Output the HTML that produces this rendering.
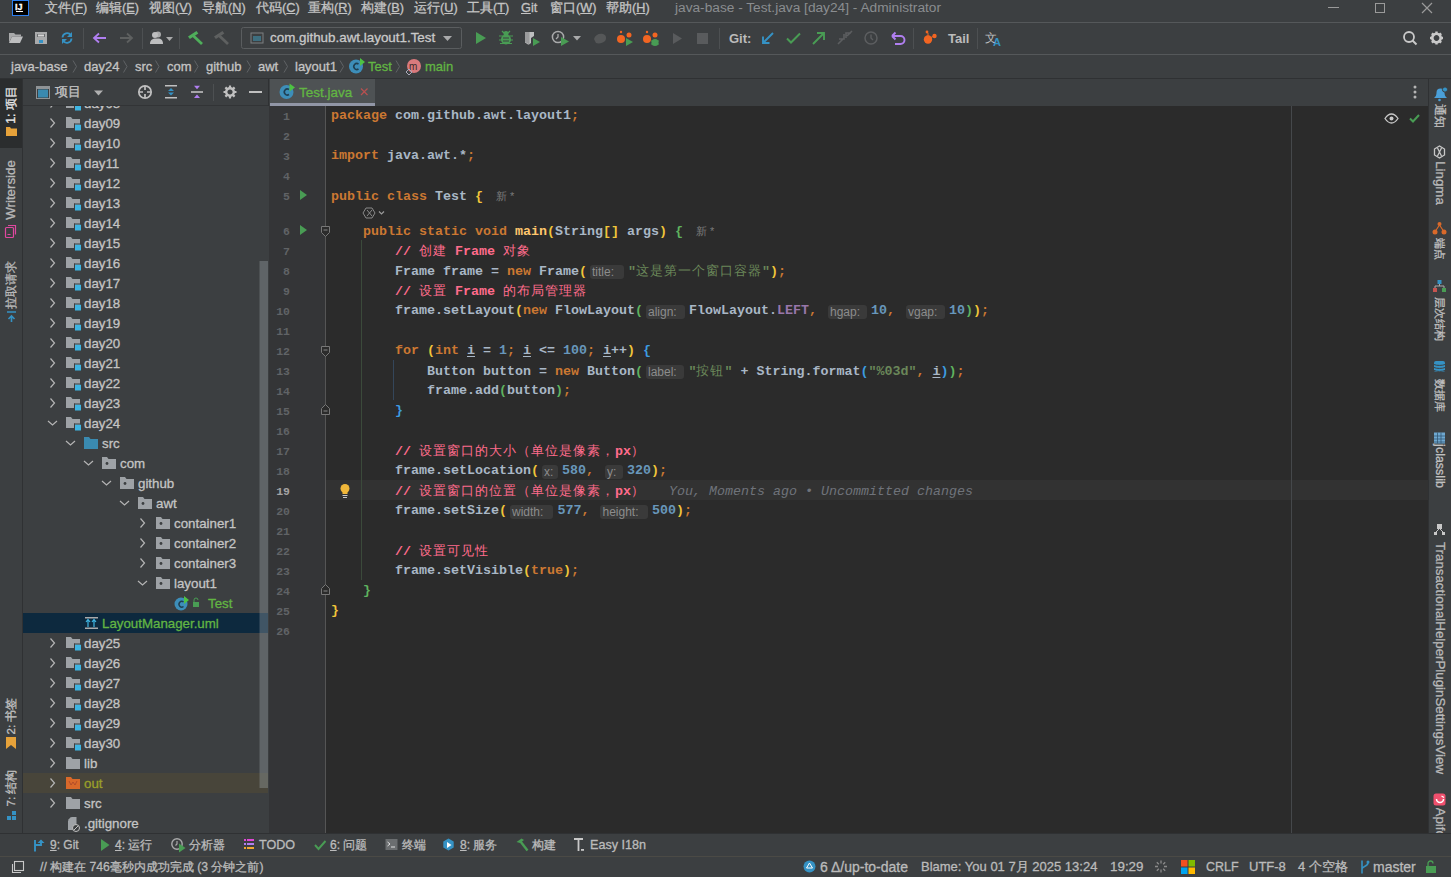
<!DOCTYPE html>
<html><head><meta charset="utf-8">
<style>
*{margin:0;padding:0;box-sizing:border-box}
html,body{width:1451px;height:877px;overflow:hidden;background:#3c3f41;font-family:"Liberation Sans",sans-serif;color:#bbbbbb;font-size:13px}
.a{position:absolute}
.t{position:absolute;white-space:nowrap;line-height:16px;-webkit-text-stroke:0.3px currentColor}
.sep{position:absolute;background:#515658}
.ic{position:absolute}
</style></head><body>

<!-- MENU BAR -->
<div class="a" style="left:0;top:0;width:1451px;height:22px;background:#3c3f41"></div>
<div class="a" style="left:12px;top:0;width:17px;height:16px;background:#000;border:1px solid #2d7ff0"></div>
<div class="t" style="left:15px;top:-1px;font-size:9px;color:#fff;font-weight:bold">IJ</div>
<div class="a" style="left:16px;top:11px;width:7px;height:1px;background:#fff"></div>
<div id="menu"><div class="t" style="left:45px;top:0px;color:#c4c4c4;font-size:12.7px">文件(<u>F</u>)</div><div class="t" style="left:96px;top:0px;color:#c4c4c4;font-size:12.7px">编辑(<u>E</u>)</div><div class="t" style="left:149px;top:0px;color:#c4c4c4;font-size:12.7px">视图(<u>V</u>)</div><div class="t" style="left:202px;top:0px;color:#c4c4c4;font-size:12.7px">导航(<u>N</u>)</div><div class="t" style="left:256px;top:0px;color:#c4c4c4;font-size:12.7px">代码(<u>C</u>)</div><div class="t" style="left:308px;top:0px;color:#c4c4c4;font-size:12.7px">重构(<u>R</u>)</div><div class="t" style="left:361px;top:0px;color:#c4c4c4;font-size:12.7px">构建(<u>B</u>)</div><div class="t" style="left:414px;top:0px;color:#c4c4c4;font-size:12.7px">运行(<u>U</u>)</div><div class="t" style="left:467px;top:0px;color:#c4c4c4;font-size:12.7px">工具(<u>T</u>)</div><div class="t" style="left:521px;top:0px;color:#c4c4c4;font-size:12.7px"><u>G</u>it</div><div class="t" style="left:550px;top:0px;color:#c4c4c4;font-size:12.7px">窗口(<u>W</u>)</div><div class="t" style="left:606px;top:0px;color:#c4c4c4;font-size:12.7px">帮助(<u>H</u>)</div></div>

<div class="t" style="left:675px;top:0px;color:#8a8d90;font-size:13.7px;-webkit-text-stroke:0">java-base - Test.java [day24] - Administrator</div>
<div class="a" style="left:1328px;top:7px;width:11px;height:1px;background:#9a9a9a"></div>
<div class="a" style="left:1375px;top:3px;width:10px;height:10px;border:1px solid #9a9a9a"></div>
<svg class="ic" style="left:1421px;top:2px" width="12" height="12"><path d="M1 1L11 11M11 1L1 11" stroke="#9a9a9a" stroke-width="1.2"/></svg>
<div class="sep" style="left:0;top:22px;width:1451px;height:1px;background:#55585a"></div>

<!-- TOOLBAR -->
<svg class="a" style="left:0;top:0" width="1451" height="56">
<!-- open folder -->
<path d="M9 33h5l1.5 1.5H21v2H12l-3 6z" fill="#a9aaab"/>
<path d="M9 43l3-6.5h11l-3 6.5z" fill="#bdbebf"/>
<!-- save -->
<rect x="35" y="32" width="12" height="12" fill="#a9aaab"/>
<rect x="37" y="34" width="8" height="3" fill="#6b6d6f"/>
<rect x="38" y="34.5" width="6" height="2" fill="#d6d6d6"/>
<rect x="39" y="40" width="4" height="3" fill="#3592c4"/>
<!-- sync -->
<path d="M62.5 37.5a4.6 4.6 0 0 1 8.4-2.3" fill="none" stroke="#3592c4" stroke-width="1.8"/>
<path d="M72 32v5h-5z" fill="#3592c4"/>
<path d="M71.5 38.5a4.6 4.6 0 0 1-8.4 2.3" fill="none" stroke="#3592c4" stroke-width="1.8"/>
<path d="M62 44v-5h5z" fill="#3592c4"/>
<rect x="83" y="28" width="1" height="21" fill="#4d5052"/>
<!-- back -->
<path d="M94 38h12M99 33.5L94 38l5 4.5" fill="none" stroke="#b07ff0" stroke-width="1.8"/>
<!-- forward -->
<path d="M120 38h12M127 33.5l5 4.5-5 4.5" fill="none" stroke="#5e6060" stroke-width="1.8"/>
<rect x="142" y="28" width="1" height="21" fill="#4d5052"/>
<!-- user -->
<circle cx="158" cy="34.5" r="3" fill="#a9aaab"/>
<path d="M150 44c0-4 2.5-5.5 6-5.5h2c3 0 5 1.5 5 5.5z" fill="#bdbebf"/>
<circle cx="155" cy="35" r="3" fill="#bdbebf"/>
<path d="M166 37h7l-3.5 4z" fill="#a9aaab"/>
<rect x="179" y="28" width="1" height="21" fill="#4d5052"/>
<!-- hammer green -->
<path d="M188 36.5l8.5-5.5 1.8 2.6-8.4 5.4z" fill="#4fae5b"/>
<path d="M193 35.5l9 8.5" stroke="#4fae5b" stroke-width="2.8"/>
<!-- hammer gray -->
<path d="M214 36.5l8.5-5.5 1.8 2.6-8.4 5.4z" fill="#5e6060"/>
<path d="M219 35.5l9 8.5" stroke="#5e6060" stroke-width="2.8"/>
<!-- run config combo -->
<rect x="241.5" y="27.5" width="220" height="21" rx="2" fill="none" stroke="#5a5d5f"/>
<rect x="251" y="33" width="12" height="10" fill="none" stroke="#7d8082"/>
<rect x="253" y="36" width="8" height="5" fill="#3e6f80"/>
<path d="M443 36h9l-4.5 5z" fill="#a9aaab"/>
<!-- run -->
<path d="M476 32v12l10-6z" fill="#499c54"/>
<!-- debug -->
<ellipse cx="506" cy="39.5" rx="5" ry="5" fill="#499c54"/>
<circle cx="506" cy="33.5" r="2.5" fill="#499c54"/>
<path d="M499 36h14M499 40h14M500 43.5h12M502 31l2 2M510 31l-2 2" stroke="#499c54" stroke-width="1.2"/>
<path d="M503 38h6M503 41h6" stroke="#3c3f41" stroke-width="1"/>
<!-- coverage -->
<path d="M525 32h9v4l-3 2v5l-2 1.5h-1l-3-2z" fill="#bdbebf"/>
<path d="M525 32h4.5v12l-1 0-3.5-2z" fill="#9a9b9c"/>
<path d="M533 38v8l7-4z" fill="#499c54"/>
<!-- profiler -->
<circle cx="558" cy="37" r="5.6" fill="none" stroke="#a9aaab" stroke-width="1.5"/>
<path d="M558 34v3l-2 2" stroke="#a9aaab" stroke-width="1.3" fill="none"/>
<path d="M561 37v9l8-4.5z" fill="#499c54"/>
<path d="M573 36h8l-4 4.5z" fill="#a9aaab"/>
<!-- gray hand -->
<path d="M594 39c1-4 5-6 9-5 3 1 4 4 2 7-2 2-6 3-9 2z" fill="#555758"/>
<!-- orange run -->
<circle cx="621" cy="39" r="4" fill="#f26522"/>
<circle cx="629" cy="35" r="2.5" fill="#f26522"/>
<circle cx="621" cy="32" r="1.2" fill="#f26522"/>
<path d="M626 38v8l7-4z" fill="#499c54"/>
<!-- orange debug -->
<circle cx="647" cy="39" r="4" fill="#f26522"/>
<circle cx="655" cy="35" r="2.5" fill="#f26522"/>
<circle cx="647" cy="32" r="1.2" fill="#f26522"/>
<ellipse cx="655" cy="42.5" rx="3.5" ry="3.5" fill="#499c54"/>
<path d="M651 41h8M651 44h8" stroke="#499c54" stroke-width="1"/>
<!-- gray run -->
<path d="M673 33v11l9-5.5z" fill="#595b5d"/>
<!-- stop -->
<rect x="697" y="33" width="11" height="11" fill="#595b5d"/>
<rect x="719" y="28" width="1" height="21" fill="#4d5052"/>
<text x="729" y="43" font-family="Liberation Sans" font-size="13" font-weight="bold" fill="#bbbbbb">Git:</text>
<!-- update arrow -->
<path d="M773 33l-10 10M763 36.5v6.5h6.5" fill="none" stroke="#3592c4" stroke-width="1.9"/>
<!-- check -->
<path d="M787 38.5l4 4 9-9" fill="none" stroke="#499c54" stroke-width="2"/>
<!-- push arrow -->
<path d="M813 44l11-11M817 33h7v7" fill="none" stroke="#499c54" stroke-width="1.9"/>
<!-- merge gray -->
<path d="M838 44l5-5M847 36l5-5M844 34v5h-5M846 38v-5h5" fill="none" stroke="#5c5e60" stroke-width="1.6"/>
<!-- clock -->
<circle cx="871" cy="38" r="6" fill="none" stroke="#5c5e60" stroke-width="1.5"/>
<path d="M871 34.5v3.5l2 2" fill="none" stroke="#5c5e60" stroke-width="1.4"/>
<!-- undo -->
<path d="M893 36h7.5a4 4 0 0 1 0 8H895" fill="none" stroke="#b07ff0" stroke-width="1.9"/>
<path d="M892 36l3.5-3.5M892 36l3.5 3.5" stroke="#b07ff0" stroke-width="1.9"/>
<rect x="913" y="28" width="1" height="21" fill="#4d5052"/>
<!-- tail icon -->
<circle cx="928" cy="39.5" r="4.2" fill="#f26522"/>
<circle cx="934.5" cy="36" r="2.2" fill="#f26522"/>
<circle cx="927" cy="32" r="1.4" fill="#f26522"/>
<path d="M928 33v4M930 38l4-2" stroke="#f26522" stroke-width="1"/>
<text x="948" y="43" font-family="Liberation Sans" font-size="13" font-weight="bold" fill="#bbbbbb">Tail</text>
<rect x="977" y="28" width="1" height="21" fill="#4d5052"/>
<!-- translate -->
<text x="985" y="42" font-family="Liberation Sans" font-size="12" fill="#bdbebf">文</text>
<text x="993" y="46" font-family="Liberation Sans" font-size="11" font-weight="bold" fill="#3592c4">A</text>
<!-- search -->
<circle cx="1409" cy="37" r="5" fill="none" stroke="#c9c9c9" stroke-width="1.8"/>
<path d="M1412.5 40.5l4 4" stroke="#c9c9c9" stroke-width="2"/>
<!-- gear -->
<g transform="translate(1436.5 38)">
<circle r="4.2" fill="none" stroke="#c9c9c9" stroke-width="2.6"/>
<path d="M0-6.5v3M0 6.5v-3M-6.5 0h3M6.5 0h-3M-4.6-4.6l2 2M4.6 4.6l-2-2M-4.6 4.6l2-2M4.6-4.6l-2 2" stroke="#c9c9c9" stroke-width="2.4"/>
</g>
</svg>
<div class="t" style="left:270px;top:30px;color:#c9c9c9;font-size:13.4px">com.github.awt.layout1.Test</div>

<div class="sep" style="left:0;top:54px;width:1451px;height:1px;background:#55585a"></div>

<!-- BREADCRUMB -->
<div class="t" style="left:11px;top:59px;color:#c4c4c4;font-size:13px">java-base</div>
<div class="t" style="left:84px;top:59px;color:#c4c4c4;font-size:13px">day24</div>
<div class="t" style="left:135px;top:59px;color:#c4c4c4;font-size:13px">src</div>
<div class="t" style="left:167px;top:59px;color:#c4c4c4;font-size:13px">com</div>
<div class="t" style="left:206px;top:59px;color:#c4c4c4;font-size:13px">github</div>
<div class="t" style="left:258px;top:59px;color:#c4c4c4;font-size:13px">awt</div>
<div class="t" style="left:295px;top:59px;color:#c4c4c4;font-size:13px">layout1</div>
<div class="t" style="left:368px;top:59px;color:#62b543;font-size:13px">Test</div>
<div class="t" style="left:425px;top:59px;color:#62b543;font-size:13px">main</div>
<svg class="a" style="left:0;top:54px" width="470" height="24">
<g fill="none" stroke="#606366" stroke-width="1">
<path d="M73 6.5l3.5 6-3.5 6"/><path d="M123.5 6.5l3.5 6-3.5 6"/><path d="M155.5 6.5l3.5 6-3.5 6"/><path d="M194.5 6.5l3.5 6-3.5 6"/>
<path d="M247 6.5l3.5 6-3.5 6"/><path d="M284 6.5l3.5 6-3.5 6"/><path d="M340 6.5l3.5 6-3.5 6"/><path d="M396 6.5l3.5 6-3.5 6"/>
</g>
<circle cx="356" cy="12.5" r="7" fill="#3d8eb9"/>
<path d="M358.5 10a3 3 0 1 0 0 5" fill="none" stroke="#1f3f52" stroke-width="1.6"/>
<path d="M360 4v8l5-4z" fill="#4ec243"/>
<circle cx="414" cy="12" r="7" fill="#d97a7d"/>
<text x="409" y="15.5" font-family="Liberation Sans" font-size="10" fill="#3a2a2a">m</text>
<path d="M409 15l3 3-3 3-3-3z" fill="none" stroke="#aab" stroke-width="1"/>
</svg>

<div class="a" style="left:0;top:78px;width:1451px;height:1px;background:#2f3133"></div>

<!-- LEFT STRIPE -->
<div class="a" style="left:0;top:79px;width:22px;height:754px;background:#3c3f41"></div>
<div class="a" style="left:0;top:79px;width:22px;height:64px;background:#2d2f30"></div>
<div class="a" style="left:22px;top:79px;width:1px;height:754px;background:#2f3133"></div>
<div class="a" style="left:0;top:79px;width:22px;height:69px;background:#2b2d2e"></div>
<div class="t" style="left:11px;top:105px;transform:translate(-50%,-50%) rotate(-90deg);color:#e8e8e8;font-size:12.3px">1: 项目</div>
<svg class="a" style="left:0;top:120px" width="22" height="20"><path d="M6 7h4l1 1.5h6V16H6z" fill="#e6a23a"/></svg>
<div class="t" style="left:11px;top:190px;transform:translate(-50%,-50%) rotate(-90deg);color:#b8b8b8;font-size:13.3px">Writerside</div>
<svg class="a" style="left:0;top:222px" width="22" height="20"><rect x="5.5" y="5.5" width="8" height="10" rx="1" fill="none" stroke="#e048a0" stroke-width="1.2"/><path d="M8 3.5h7.5v9" fill="none" stroke="#e048a0" stroke-width="1.2"/><path d="M7.5 12.5h3" stroke="#e048a0"/></svg>
<div class="t" style="left:11px;top:285px;transform:translate(-50%,-50%) rotate(-90deg);color:#b8b8b8;font-size:12px">拉取请求</div>
<svg class="a" style="left:0;top:309px" width="22" height="16"><path d="M7 3h9M11.5 13V7M8.5 10l3-3 3 3" fill="none" stroke="#3592c4" stroke-width="1.6"/></svg>
<div class="t" style="left:11px;top:716px;transform:translate(-50%,-50%) rotate(-90deg);color:#c0c0c0;font-size:11.5px">2: 书签</div>
<svg class="a" style="left:0;top:735px" width="22" height="16"><path d="M6 2h10v12l-5-4-5 4z" fill="#e6a23a"/></svg>
<div class="t" style="left:11px;top:788px;transform:translate(-50%,-50%) rotate(-90deg);color:#c0c0c0;font-size:11.5px">7: 结构</div>
<svg class="a" style="left:0;top:808px" width="22" height="16"><rect x="12" y="3" width="4" height="4" fill="#3592c4"/><rect x="7" y="8" width="4" height="4" fill="#3592c4"/><rect x="12" y="8" width="4" height="4" fill="#3592c4"/></svg>


<!-- PROJECT PANEL -->
<div class="a" style="left:23px;top:79px;width:245px;height:754px;background:#3c3f41"></div>
<svg class="a" style="left:22px;top:79px" width="246" height="26">
<rect x="14.5" y="7.5" width="13" height="12" fill="none" stroke="#8f9396"/>
<rect x="15" y="8" width="12" height="2" fill="#8f9396"/>
<rect x="16" y="10.5" width="10" height="8" fill="#3a8ab0"/>
<path d="M72 11.5h9l-4.5 5z" fill="#b0b0b0"/>
<circle cx="123" cy="13" r="6.2" fill="none" stroke="#c0c0c0" stroke-width="1.7"/>
<path d="M123 7v4M123 15v4M117 13h4M125 13h4" stroke="#c0c0c0" stroke-width="1.7"/>
<path d="M143 6.8h12M143 18.8h12" stroke="#c0c0c0" stroke-width="1.6"/>
<path d="M146 12.1l3-3 3 3zM146 13.5l3 3 3-3z" fill="#3592c4"/>
<path d="M169 13h12" stroke="#c0c0c0" stroke-width="1.6"/>
<path d="M172 6.8l3 3.4 3-3.4zM172 18.9l3-3.4 3 3.4z" fill="#b07ff0"/>
<rect x="191" y="5" width="1" height="17" fill="#4d5052"/>
<g transform="translate(208 13)">
<circle r="3.8" fill="none" stroke="#c0c0c0" stroke-width="2.4"/>
<path d="M0-6.5v3M0 6.5v-3M-6.5 0h3M6.5 0h-3M-4.6-4.6l2 2M4.6 4.6l-2-2M-4.6 4.6l2-2M4.6-4.6l-2 2" stroke="#c0c0c0" stroke-width="2.2"/>
</g>
<rect x="227" y="12" width="13" height="2" fill="#c0c0c0"/>
</svg>
<div class="t" style="left:55px;top:84px;color:#c4c4c4">项目</div>
<div class="a" style="left:23px;top:105px;width:245px;height:1px;background:#323436"></div>
<div class="a" style="left:23px;top:106px;width:245px;height:727px;overflow:hidden">
<svg class="a" style="left:0;top:0" width="245" height="727">
<path d="M27.5 -7.5l4 4.5-4 4.5" fill="none" stroke="#b5b5b5" stroke-width="1.2"/>
<path d="M43 -9h5l1.5 2h7.5v9h-14z" fill="#9ea2a6"/><rect x="52" y="-1.5" width="6" height="6" fill="#3fb5e2"/><rect x="51" y="-2.5" width="1" height="7" fill="#3c3f41"/><rect x="51" y="-2.5" width="7" height="1" fill="#3c3f41"/>
<path d="M27.5 12.5l4 4.5-4 4.5" fill="none" stroke="#b5b5b5" stroke-width="1.2"/>
<path d="M43 11h5l1.5 2h7.5v9h-14z" fill="#9ea2a6"/><rect x="52" y="18.5" width="6" height="6" fill="#3fb5e2"/><rect x="51" y="17.5" width="1" height="7" fill="#3c3f41"/><rect x="51" y="17.5" width="7" height="1" fill="#3c3f41"/>
<path d="M27.5 32.5l4 4.5-4 4.5" fill="none" stroke="#b5b5b5" stroke-width="1.2"/>
<path d="M43 31h5l1.5 2h7.5v9h-14z" fill="#9ea2a6"/><rect x="52" y="38.5" width="6" height="6" fill="#3fb5e2"/><rect x="51" y="37.5" width="1" height="7" fill="#3c3f41"/><rect x="51" y="37.5" width="7" height="1" fill="#3c3f41"/>
<path d="M27.5 52.5l4 4.5-4 4.5" fill="none" stroke="#b5b5b5" stroke-width="1.2"/>
<path d="M43 51h5l1.5 2h7.5v9h-14z" fill="#9ea2a6"/><rect x="52" y="58.5" width="6" height="6" fill="#3fb5e2"/><rect x="51" y="57.5" width="1" height="7" fill="#3c3f41"/><rect x="51" y="57.5" width="7" height="1" fill="#3c3f41"/>
<path d="M27.5 72.5l4 4.5-4 4.5" fill="none" stroke="#b5b5b5" stroke-width="1.2"/>
<path d="M43 71h5l1.5 2h7.5v9h-14z" fill="#9ea2a6"/><rect x="52" y="78.5" width="6" height="6" fill="#3fb5e2"/><rect x="51" y="77.5" width="1" height="7" fill="#3c3f41"/><rect x="51" y="77.5" width="7" height="1" fill="#3c3f41"/>
<path d="M27.5 92.5l4 4.5-4 4.5" fill="none" stroke="#b5b5b5" stroke-width="1.2"/>
<path d="M43 91h5l1.5 2h7.5v9h-14z" fill="#9ea2a6"/><rect x="52" y="98.5" width="6" height="6" fill="#3fb5e2"/><rect x="51" y="97.5" width="1" height="7" fill="#3c3f41"/><rect x="51" y="97.5" width="7" height="1" fill="#3c3f41"/>
<path d="M27.5 112.5l4 4.5-4 4.5" fill="none" stroke="#b5b5b5" stroke-width="1.2"/>
<path d="M43 111h5l1.5 2h7.5v9h-14z" fill="#9ea2a6"/><rect x="52" y="118.5" width="6" height="6" fill="#3fb5e2"/><rect x="51" y="117.5" width="1" height="7" fill="#3c3f41"/><rect x="51" y="117.5" width="7" height="1" fill="#3c3f41"/>
<path d="M27.5 132.5l4 4.5-4 4.5" fill="none" stroke="#b5b5b5" stroke-width="1.2"/>
<path d="M43 131h5l1.5 2h7.5v9h-14z" fill="#9ea2a6"/><rect x="52" y="138.5" width="6" height="6" fill="#3fb5e2"/><rect x="51" y="137.5" width="1" height="7" fill="#3c3f41"/><rect x="51" y="137.5" width="7" height="1" fill="#3c3f41"/>
<path d="M27.5 152.5l4 4.5-4 4.5" fill="none" stroke="#b5b5b5" stroke-width="1.2"/>
<path d="M43 151h5l1.5 2h7.5v9h-14z" fill="#9ea2a6"/><rect x="52" y="158.5" width="6" height="6" fill="#3fb5e2"/><rect x="51" y="157.5" width="1" height="7" fill="#3c3f41"/><rect x="51" y="157.5" width="7" height="1" fill="#3c3f41"/>
<path d="M27.5 172.5l4 4.5-4 4.5" fill="none" stroke="#b5b5b5" stroke-width="1.2"/>
<path d="M43 171h5l1.5 2h7.5v9h-14z" fill="#9ea2a6"/><rect x="52" y="178.5" width="6" height="6" fill="#3fb5e2"/><rect x="51" y="177.5" width="1" height="7" fill="#3c3f41"/><rect x="51" y="177.5" width="7" height="1" fill="#3c3f41"/>
<path d="M27.5 192.5l4 4.5-4 4.5" fill="none" stroke="#b5b5b5" stroke-width="1.2"/>
<path d="M43 191h5l1.5 2h7.5v9h-14z" fill="#9ea2a6"/><rect x="52" y="198.5" width="6" height="6" fill="#3fb5e2"/><rect x="51" y="197.5" width="1" height="7" fill="#3c3f41"/><rect x="51" y="197.5" width="7" height="1" fill="#3c3f41"/>
<path d="M27.5 212.5l4 4.5-4 4.5" fill="none" stroke="#b5b5b5" stroke-width="1.2"/>
<path d="M43 211h5l1.5 2h7.5v9h-14z" fill="#9ea2a6"/><rect x="52" y="218.5" width="6" height="6" fill="#3fb5e2"/><rect x="51" y="217.5" width="1" height="7" fill="#3c3f41"/><rect x="51" y="217.5" width="7" height="1" fill="#3c3f41"/>
<path d="M27.5 232.5l4 4.5-4 4.5" fill="none" stroke="#b5b5b5" stroke-width="1.2"/>
<path d="M43 231h5l1.5 2h7.5v9h-14z" fill="#9ea2a6"/><rect x="52" y="238.5" width="6" height="6" fill="#3fb5e2"/><rect x="51" y="237.5" width="1" height="7" fill="#3c3f41"/><rect x="51" y="237.5" width="7" height="1" fill="#3c3f41"/>
<path d="M27.5 252.5l4 4.5-4 4.5" fill="none" stroke="#b5b5b5" stroke-width="1.2"/>
<path d="M43 251h5l1.5 2h7.5v9h-14z" fill="#9ea2a6"/><rect x="52" y="258.5" width="6" height="6" fill="#3fb5e2"/><rect x="51" y="257.5" width="1" height="7" fill="#3c3f41"/><rect x="51" y="257.5" width="7" height="1" fill="#3c3f41"/>
<path d="M27.5 272.5l4 4.5-4 4.5" fill="none" stroke="#b5b5b5" stroke-width="1.2"/>
<path d="M43 271h5l1.5 2h7.5v9h-14z" fill="#9ea2a6"/><rect x="52" y="278.5" width="6" height="6" fill="#3fb5e2"/><rect x="51" y="277.5" width="1" height="7" fill="#3c3f41"/><rect x="51" y="277.5" width="7" height="1" fill="#3c3f41"/>
<path d="M27.5 292.5l4 4.5-4 4.5" fill="none" stroke="#b5b5b5" stroke-width="1.2"/>
<path d="M43 291h5l1.5 2h7.5v9h-14z" fill="#9ea2a6"/><rect x="52" y="298.5" width="6" height="6" fill="#3fb5e2"/><rect x="51" y="297.5" width="1" height="7" fill="#3c3f41"/><rect x="51" y="297.5" width="7" height="1" fill="#3c3f41"/>
<path d="M25 315l4.5 4 4.5-4" fill="none" stroke="#b5b5b5" stroke-width="1.2"/>
<path d="M43 311h5l1.5 2h7.5v9h-14z" fill="#9ea2a6"/><rect x="52" y="318.5" width="6" height="6" fill="#3fb5e2"/><rect x="51" y="317.5" width="1" height="7" fill="#3c3f41"/><rect x="51" y="317.5" width="7" height="1" fill="#3c3f41"/>
<path d="M43 335l4.5 4 4.5-4" fill="none" stroke="#b5b5b5" stroke-width="1.2"/>
<path d="M61 331h5l1.5 2h7.5v10h-14z" fill="#3a8ab0"/>
<path d="M61 355l4.5 4 4.5-4" fill="none" stroke="#b5b5b5" stroke-width="1.2"/>
<path d="M79 351h5l1.5 2h7.5v10h-14z" fill="#9ea2a6"/><circle cx="84" cy="357.5" r="1.4" fill="#3c3f41"/>
<path d="M79 375l4.5 4 4.5-4" fill="none" stroke="#b5b5b5" stroke-width="1.2"/>
<path d="M97 371h5l1.5 2h7.5v10h-14z" fill="#9ea2a6"/><circle cx="102" cy="377.5" r="1.4" fill="#3c3f41"/>
<path d="M97 395l4.5 4 4.5-4" fill="none" stroke="#b5b5b5" stroke-width="1.2"/>
<path d="M115 391h5l1.5 2h7.5v10h-14z" fill="#9ea2a6"/><circle cx="120" cy="397.5" r="1.4" fill="#3c3f41"/>
<path d="M117.5 412.5l4 4.5-4 4.5" fill="none" stroke="#b5b5b5" stroke-width="1.2"/>
<path d="M133 411h5l1.5 2h7.5v10h-14z" fill="#9ea2a6"/><circle cx="138" cy="417.5" r="1.4" fill="#3c3f41"/>
<path d="M117.5 432.5l4 4.5-4 4.5" fill="none" stroke="#b5b5b5" stroke-width="1.2"/>
<path d="M133 431h5l1.5 2h7.5v10h-14z" fill="#9ea2a6"/><circle cx="138" cy="437.5" r="1.4" fill="#3c3f41"/>
<path d="M117.5 452.5l4 4.5-4 4.5" fill="none" stroke="#b5b5b5" stroke-width="1.2"/>
<path d="M133 451h5l1.5 2h7.5v10h-14z" fill="#9ea2a6"/><circle cx="138" cy="457.5" r="1.4" fill="#3c3f41"/>
<path d="M115 475l4.5 4 4.5-4" fill="none" stroke="#b5b5b5" stroke-width="1.2"/>
<path d="M133 471h5l1.5 2h7.5v10h-14z" fill="#9ea2a6"/><circle cx="138" cy="477.5" r="1.4" fill="#3c3f41"/>
<circle cx="158" cy="498" r="6.5" fill="#3d8eb9"/><path d="M160.5 496a2.8 2.8 0 1 0 0 4.5" fill="none" stroke="#1f3f52" stroke-width="1.5"/><path d="M161 490v8l5-4z" fill="#4ec243"/>
<rect x="170" y="496" width="6" height="5" fill="#499c54"/><path d="M171 496v-2a2 2 0 0 1 4 0" fill="none" stroke="#499c54" stroke-width="1"/>
<rect x="0" y="507" width="245" height="20" fill="#0d293e"/>
<rect x="62" y="511" width="13" height="1.5" fill="#a9aaab"/><rect x="62" y="521.5" width="13" height="1.5" fill="#a9aaab"/><path d="M65 521v-7M63 516l2-2.5 2 2.5M71 521v-7M69 516l2-2.5 2 2.5" stroke="#3fb5e2" fill="none" stroke-width="1.2"/>
<path d="M27.5 532.5l4 4.5-4 4.5" fill="none" stroke="#b5b5b5" stroke-width="1.2"/>
<path d="M43 531h5l1.5 2h7.5v9h-14z" fill="#9ea2a6"/><rect x="52" y="538.5" width="6" height="6" fill="#3fb5e2"/><rect x="51" y="537.5" width="1" height="7" fill="#3c3f41"/><rect x="51" y="537.5" width="7" height="1" fill="#3c3f41"/>
<path d="M27.5 552.5l4 4.5-4 4.5" fill="none" stroke="#b5b5b5" stroke-width="1.2"/>
<path d="M43 551h5l1.5 2h7.5v9h-14z" fill="#9ea2a6"/><rect x="52" y="558.5" width="6" height="6" fill="#3fb5e2"/><rect x="51" y="557.5" width="1" height="7" fill="#3c3f41"/><rect x="51" y="557.5" width="7" height="1" fill="#3c3f41"/>
<path d="M27.5 572.5l4 4.5-4 4.5" fill="none" stroke="#b5b5b5" stroke-width="1.2"/>
<path d="M43 571h5l1.5 2h7.5v9h-14z" fill="#9ea2a6"/><rect x="52" y="578.5" width="6" height="6" fill="#3fb5e2"/><rect x="51" y="577.5" width="1" height="7" fill="#3c3f41"/><rect x="51" y="577.5" width="7" height="1" fill="#3c3f41"/>
<path d="M27.5 592.5l4 4.5-4 4.5" fill="none" stroke="#b5b5b5" stroke-width="1.2"/>
<path d="M43 591h5l1.5 2h7.5v9h-14z" fill="#9ea2a6"/><rect x="52" y="598.5" width="6" height="6" fill="#3fb5e2"/><rect x="51" y="597.5" width="1" height="7" fill="#3c3f41"/><rect x="51" y="597.5" width="7" height="1" fill="#3c3f41"/>
<path d="M27.5 612.5l4 4.5-4 4.5" fill="none" stroke="#b5b5b5" stroke-width="1.2"/>
<path d="M43 611h5l1.5 2h7.5v9h-14z" fill="#9ea2a6"/><rect x="52" y="618.5" width="6" height="6" fill="#3fb5e2"/><rect x="51" y="617.5" width="1" height="7" fill="#3c3f41"/><rect x="51" y="617.5" width="7" height="1" fill="#3c3f41"/>
<path d="M27.5 632.5l4 4.5-4 4.5" fill="none" stroke="#b5b5b5" stroke-width="1.2"/>
<path d="M43 631h5l1.5 2h7.5v9h-14z" fill="#9ea2a6"/><rect x="52" y="638.5" width="6" height="6" fill="#3fb5e2"/><rect x="51" y="637.5" width="1" height="7" fill="#3c3f41"/><rect x="51" y="637.5" width="7" height="1" fill="#3c3f41"/>
<path d="M27.5 652.5l4 4.5-4 4.5" fill="none" stroke="#b5b5b5" stroke-width="1.2"/>
<path d="M43 651h5l1.5 2h7.5v10h-14z" fill="#9ea2a6"/>
<rect x="0" y="667" width="245" height="20" fill="#48453a"/>
<path d="M27.5 672.5l4 4.5-4 4.5" fill="none" stroke="#b5b5b5" stroke-width="1.2"/>
<path d="M43 671h5l1.5 2h7.5v10h-14z" fill="#d9692a"/><path d="M46 675l2 4 2-3 2 3 2-4" stroke="#a8452a" fill="none" stroke-width="0.8"/>
<path d="M27.5 692.5l4 4.5-4 4.5" fill="none" stroke="#b5b5b5" stroke-width="1.2"/>
<path d="M43 691h5l1.5 2h7.5v10h-14z" fill="#9ea2a6"/>
<path d="M48.5 711h5v13h-8.5v-9.5z" fill="#9ea2a6"/><path d="M45 714l3-3v3z" fill="#9ea2a6"/><circle cx="53" cy="722" r="3.5" fill="#3c3f41" stroke="#c0c0c0" stroke-width="1"/><path d="M51 724l4-4" stroke="#c0c0c0" stroke-width="1"/>
<rect x="236.5" y="155" width="9" height="527" fill="#a0a8b0" fill-opacity="0.35"/>
</svg>
<div class="t" style="left:61px;top:-10px;color:#c4c4c4;font-size:13.3px">day08</div>
<div class="t" style="left:61px;top:10px;color:#c4c4c4;font-size:13.3px">day09</div>
<div class="t" style="left:61px;top:30px;color:#c4c4c4;font-size:13.3px">day10</div>
<div class="t" style="left:61px;top:50px;color:#c4c4c4;font-size:13.3px">day11</div>
<div class="t" style="left:61px;top:70px;color:#c4c4c4;font-size:13.3px">day12</div>
<div class="t" style="left:61px;top:90px;color:#c4c4c4;font-size:13.3px">day13</div>
<div class="t" style="left:61px;top:110px;color:#c4c4c4;font-size:13.3px">day14</div>
<div class="t" style="left:61px;top:130px;color:#c4c4c4;font-size:13.3px">day15</div>
<div class="t" style="left:61px;top:150px;color:#c4c4c4;font-size:13.3px">day16</div>
<div class="t" style="left:61px;top:170px;color:#c4c4c4;font-size:13.3px">day17</div>
<div class="t" style="left:61px;top:190px;color:#c4c4c4;font-size:13.3px">day18</div>
<div class="t" style="left:61px;top:210px;color:#c4c4c4;font-size:13.3px">day19</div>
<div class="t" style="left:61px;top:230px;color:#c4c4c4;font-size:13.3px">day20</div>
<div class="t" style="left:61px;top:250px;color:#c4c4c4;font-size:13.3px">day21</div>
<div class="t" style="left:61px;top:270px;color:#c4c4c4;font-size:13.3px">day22</div>
<div class="t" style="left:61px;top:290px;color:#c4c4c4;font-size:13.3px">day23</div>
<div class="t" style="left:61px;top:310px;color:#c4c4c4;font-size:13.3px">day24</div>
<div class="t" style="left:79px;top:330px;color:#c4c4c4;font-size:13.3px">src</div>
<div class="t" style="left:97px;top:350px;color:#c4c4c4;font-size:13.3px">com</div>
<div class="t" style="left:115px;top:370px;color:#c4c4c4;font-size:13.3px">github</div>
<div class="t" style="left:133px;top:390px;color:#c4c4c4;font-size:13.3px">awt</div>
<div class="t" style="left:151px;top:410px;color:#c4c4c4;font-size:13.3px">container1</div>
<div class="t" style="left:151px;top:430px;color:#c4c4c4;font-size:13.3px">container2</div>
<div class="t" style="left:151px;top:450px;color:#c4c4c4;font-size:13.3px">container3</div>
<div class="t" style="left:151px;top:470px;color:#c4c4c4;font-size:13.3px">layout1</div>
<div class="t" style="left:185px;top:490px;color:#62b543;font-size:13.3px">Test</div>
<div class="t" style="left:79px;top:510px;color:#62b543;font-size:13.3px">LayoutManager.uml</div>
<div class="t" style="left:61px;top:530px;color:#c4c4c4;font-size:13.3px">day25</div>
<div class="t" style="left:61px;top:550px;color:#c4c4c4;font-size:13.3px">day26</div>
<div class="t" style="left:61px;top:570px;color:#c4c4c4;font-size:13.3px">day27</div>
<div class="t" style="left:61px;top:590px;color:#c4c4c4;font-size:13.3px">day28</div>
<div class="t" style="left:61px;top:610px;color:#c4c4c4;font-size:13.3px">day29</div>
<div class="t" style="left:61px;top:630px;color:#c4c4c4;font-size:13.3px">day30</div>
<div class="t" style="left:61px;top:650px;color:#c4c4c4;font-size:13.3px">lib</div>
<div class="t" style="left:61px;top:670px;color:#9aa02a;font-size:13.3px">out</div>
<div class="t" style="left:61px;top:690px;color:#c4c4c4;font-size:13.3px">src</div>
<div class="t" style="left:61px;top:710px;color:#c4c4c4;font-size:13.3px">.gitignore</div>
</div>
<div class="a" style="left:268px;top:79px;width:1px;height:27px;background:#2f3133"></div>

<!-- EDITOR -->
<style>
.cd{position:absolute;left:331px;white-space:pre;font-family:"Liberation Mono",monospace;font-size:13.333px;font-weight:bold;line-height:20px;height:20px;color:#a9b7c6}
.cj{display:inline-block;white-space:nowrap;overflow:visible;font-family:"Liberation Sans",sans-serif;font-weight:normal;font-size:13px;letter-spacing:1px}
.hn{display:inline-block;position:relative;height:20px;vertical-align:top}
.hn i{position:absolute;left:3px;top:4px;height:14px;right:4px;background:#3a3a3a;border-radius:3px;font-style:normal;font-weight:normal;font-family:"Liberation Sans",sans-serif;font-size:12px;line-height:14px;color:#8c8c8c;padding-left:2px}
.au{font-family:"Liberation Sans",sans-serif;font-weight:normal;font-size:11px;color:#7a7a7a}
.bl{font-style:italic;font-weight:normal;color:#6f737a}
.ln{position:absolute;width:24px;left:266px;text-align:right;font-family:"Liberation Mono",monospace;font-size:11.5px;font-weight:bold;line-height:20px;color:#606366}
</style>
<div class="a" style="left:269px;top:79px;width:1159px;height:27px;background:#3c3f41"></div>
<div class="a" style="left:270px;top:79px;width:105px;height:24px;background:#4e5254"></div>
<div class="a" style="left:270px;top:103px;width:105px;height:3px;background:#9196a6"></div>
<svg class="a" style="left:270px;top:79px" width="110" height="24">
<circle cx="16.5" cy="13" r="7" fill="#3d8eb9"/>
<path d="M19 10.5a3 3 0 1 0 0 5" fill="none" stroke="#1f3f52" stroke-width="1.6"/>
<path d="M19.5 4.5v8l5.5-4z" fill="#4ec243"/>
<path d="M91 9.5l6.5 6.5M97.5 9.5L91 16" stroke="#b85050" stroke-width="1.2"/>
</svg>
<div class="t" style="left:299px;top:85px;color:#62b543;font-size:13.5px">Test.java</div>
<svg class="a" style="left:1410px;top:84px" width="10" height="16"><circle cx="5" cy="3" r="1.5" fill="#b5b5b5"/><circle cx="5" cy="8" r="1.5" fill="#b5b5b5"/><circle cx="5" cy="13" r="1.5" fill="#b5b5b5"/></svg>
<div class="a" style="left:269px;top:106px;width:1159px;height:727px;background:#2b2b2b"></div>
<div class="a" style="left:269px;top:106px;width:56px;height:727px;background:#343537"></div>
<div class="a" style="left:326px;top:480px;width:1102px;height:20px;background:#323232"></div>
<div class="a" style="left:1291px;top:106px;width:1px;height:727px;background:#45484b"></div>
<div class="a" style="left:325px;top:106px;width:1px;height:727px;background:#555555"></div>
<div class="a" style="left:361px;top:240px;width:1px;height:340px;background:#3b4a3b"></div>
<div class="a" style="left:393px;top:360px;width:1px;height:40px;background:#34465a"></div>
<div class="ln" style="top:107px;color:#606366">1</div>
<div class="ln" style="top:127px;color:#606366">2</div>
<div class="ln" style="top:147px;color:#606366">3</div>
<div class="ln" style="top:167px;color:#606366">4</div>
<div class="ln" style="top:187px;color:#606366">5</div>
<div class="ln" style="top:222px;color:#606366">6</div>
<div class="ln" style="top:242px;color:#606366">7</div>
<div class="ln" style="top:262px;color:#606366">8</div>
<div class="ln" style="top:282px;color:#606366">9</div>
<div class="ln" style="top:302px;color:#606366">10</div>
<div class="ln" style="top:322px;color:#606366">11</div>
<div class="ln" style="top:342px;color:#606366">12</div>
<div class="ln" style="top:362px;color:#606366">13</div>
<div class="ln" style="top:382px;color:#606366">14</div>
<div class="ln" style="top:402px;color:#606366">15</div>
<div class="ln" style="top:422px;color:#606366">16</div>
<div class="ln" style="top:442px;color:#606366">17</div>
<div class="ln" style="top:462px;color:#606366">18</div>
<div class="ln" style="top:482px;color:#a4a3a3">19</div>
<div class="ln" style="top:502px;color:#606366">20</div>
<div class="ln" style="top:522px;color:#606366">21</div>
<div class="ln" style="top:542px;color:#606366">22</div>
<div class="ln" style="top:562px;color:#606366">23</div>
<div class="ln" style="top:582px;color:#606366">24</div>
<div class="ln" style="top:602px;color:#606366">25</div>
<div class="ln" style="top:622px;color:#606366">26</div>
<div class="cd" style="top:106px"><span style="color:#cc7832">package</span><span style="color:#a9b7c6"> com.github.awt.layout1</span><span style="color:#cc7832">;</span></div>
<div class="cd" style="top:146px"><span style="color:#cc7832">import</span><span style="color:#a9b7c6"> java.awt.*</span><span style="color:#cc7832">;</span></div>
<div class="cd" style="top:186px"><span style="color:#cc7832">public class</span><span style="color:#a9b7c6"> Test </span><span style="color:#f0c53a">{</span><span class="au" style="margin-left:13px">新 *</span></div>
<div class="cd" style="top:221px">    <span style="color:#cc7832">public static void</span> <span style="color:#ffc66d">main</span><span style="color:#f0c53a">(</span><span style="color:#a9b7c6">String</span><span style="color:#f0c53a">[]</span><span style="color:#a9b7c6"> args</span><span style="color:#f0c53a">)</span> <span style="color:#5fb35f">{</span><span class="au" style="margin-left:13px">新 *</span></div>
<div class="cd" style="top:241px">        <span style="color:#ff6b8b">// </span><span class="cj" style="width:28px;color:#ff6b8b">创建</span><span style="color:#ff6b8b"> </span><b style="color:#ff6b8b">Frame</b><span style="color:#ff6b8b"> </span><span class="cj" style="width:28px;color:#ff6b8b">对象</span></div>
<div class="cd" style="top:261px">        <span style="color:#a9b7c6">Frame frame = </span><span style="color:#cc7832">new</span><span style="color:#a9b7c6"> Frame</span><span style="color:#f0c53a">(</span><span class="hn" style="width:41px"><i>title:</i></span><span style="color:#6a8759">&quot;</span><span class="cj" style="width:126px;color:#6a8759">这是第一个窗口容器</span><span style="color:#6a8759">&quot;</span><span style="color:#f0c53a">)</span><span style="color:#cc7832">;</span></div>
<div class="cd" style="top:281px">        <span style="color:#ff6b8b">// </span><span class="cj" style="width:28px;color:#ff6b8b">设置</span><span style="color:#ff6b8b"> </span><b style="color:#ff6b8b">Frame</b><span style="color:#ff6b8b"> </span><span class="cj" style="width:84px;color:#ff6b8b">的布局管理器</span></div>
<div class="cd" style="top:301px">        <span style="color:#a9b7c6">frame.setLayout</span><span style="color:#f0c53a">(</span><span style="color:#cc7832">new</span><span style="color:#a9b7c6"> FlowLayout</span><span style="color:#5fb35f">(</span><span class="hn" style="width:46px"><i>align:</i></span><span style="color:#a9b7c6">FlowLayout.</span><span style="color:#9876aa">LEFT</span><span style="color:#cc7832">, </span><span class="hn" style="width:46px"><i>hgap:</i></span><span style="color:#6897bb">10</span><span style="color:#cc7832">, </span><span class="hn" style="width:46px"><i>vgap:</i></span><span style="color:#6897bb">10</span><span style="color:#5fb35f">)</span><span style="color:#f0c53a">)</span><span style="color:#cc7832">;</span></div>
<div class="cd" style="top:341px">        <span style="color:#cc7832">for</span> <span style="color:#f0c53a">(</span><span style="color:#cc7832">int</span> <span style="color:#a9b7c6;text-decoration:underline;text-underline-offset:2px">i</span><span style="color:#a9b7c6"> = </span><span style="color:#6897bb">1</span><span style="color:#cc7832">;</span> <span style="color:#a9b7c6;text-decoration:underline;text-underline-offset:2px">i</span><span style="color:#a9b7c6"> &lt;= </span><span style="color:#6897bb">100</span><span style="color:#cc7832">;</span> <span style="color:#a9b7c6;text-decoration:underline;text-underline-offset:2px">i</span><span style="color:#a9b7c6">++</span><span style="color:#f0c53a">)</span> <span style="color:#3d9ce0">{</span></div>
<div class="cd" style="top:361px">            <span style="color:#a9b7c6">Button button = </span><span style="color:#cc7832">new</span><span style="color:#a9b7c6"> Button</span><span style="color:#5fb35f">(</span><span class="hn" style="width:45.5px"><i>label:</i></span><span style="color:#6a8759">&quot;</span><span class="cj" style="width:28px;color:#6a8759">按钮</span><span style="color:#6a8759">&quot;</span><span style="color:#a9b7c6"> + String.format</span><span style="color:#3d9ce0">(</span><span style="color:#6a8759">&quot;%03d&quot;</span><span style="color:#cc7832">,</span> <span style="color:#a9b7c6;text-decoration:underline;text-underline-offset:2px">i</span><span style="color:#3d9ce0">)</span><span style="color:#5fb35f">)</span><span style="color:#cc7832">;</span></div>
<div class="cd" style="top:381px">            <span style="color:#a9b7c6">frame.add</span><span style="color:#5fb35f">(</span><span style="color:#a9b7c6">button</span><span style="color:#5fb35f">)</span><span style="color:#cc7832">;</span></div>
<div class="cd" style="top:401px">        <span style="color:#3d9ce0">}</span></div>
<div class="cd" style="top:441px">        <span style="color:#ff6b8b">// </span><span class="cj" style="width:196px;color:#ff6b8b">设置窗口的大小（单位是像素，</span><b style="color:#ff6b8b">px</b><span class="cj" style="width:14px;color:#ff6b8b">）</span></div>
<div class="cd" style="top:461px">        <span style="color:#a9b7c6">frame.setLocation</span><span style="color:#f0c53a">(</span><span class="hn" style="width:23px"><i>x:</i></span><span style="color:#6897bb">580</span><span style="color:#cc7832">, </span><span class="hn" style="width:25px"><i>y:</i></span><span style="color:#6897bb">320</span><span style="color:#f0c53a">)</span><span style="color:#cc7832">;</span></div>
<div class="cd" style="top:481px">        <span style="color:#ff6b8b">// </span><span class="cj" style="width:196px;color:#ff6b8b">设置窗口的位置（单位是像素，</span><b style="color:#ff6b8b">px</b><span class="cj" style="width:14px;color:#ff6b8b">）</span><span class="bl">   You, Moments ago • Uncommitted changes</span></div>
<div class="cd" style="top:501px">        <span style="color:#a9b7c6">frame.setSize</span><span style="color:#f0c53a">(</span><span class="hn" style="width:50.5px"><i>width:</i></span><span style="color:#6897bb">577</span><span style="color:#cc7832">, </span><span class="hn" style="width:54.5px"><i>height:</i></span><span style="color:#6897bb">500</span><span style="color:#f0c53a">)</span><span style="color:#cc7832">;</span></div>
<div class="cd" style="top:541px">        <span style="color:#ff6b8b">// </span><span class="cj" style="width:70px;color:#ff6b8b">设置可见性</span></div>
<div class="cd" style="top:561px">        <span style="color:#a9b7c6">frame.setVisible</span><span style="color:#f0c53a">(</span><span style="color:#cc7832">true</span><span style="color:#f0c53a">)</span><span style="color:#cc7832">;</span></div>
<div class="cd" style="top:581px">    <span style="color:#5fb35f">}</span></div>
<div class="cd" style="top:601px"><span style="color:#f0c53a">}</span></div>
<svg class="a" style="left:0;top:0" width="1451" height="877">
<path d="M300 190v10l7-5z" fill="#499c54"/>
<path d="M300 225v10l7-5z" fill="#499c54"/>
<path d="M321.5 226.5h8v6l-4 4-4-4z" fill="#2b2b2b" stroke="#777" stroke-width="1"/><path d="M323.5 230h4" stroke="#888" stroke-width="1"/>
<path d="M321.5 346.5h8v6l-4 4-4-4z" fill="#2b2b2b" stroke="#777" stroke-width="1"/><path d="M323.5 350h4" stroke="#888" stroke-width="1"/>
<path d="M321.5 414.5h8v-6l-4-4-4 4z" fill="#2b2b2b" stroke="#777" stroke-width="1"/><path d="M323.5 411h4" stroke="#888" stroke-width="1"/>
<path d="M321.5 594.5h8v-6l-4-4-4 4z" fill="#2b2b2b" stroke="#777" stroke-width="1"/><path d="M323.5 591h4" stroke="#888" stroke-width="1"/>
<circle cx="345" cy="488.5" r="4.5" fill="#f0b73a"/><rect x="342.5" y="492" width="5" height="2" fill="#f0b73a"/><path d="M342.5 495.5h5M343 497.5h4" stroke="#c8c8c8" stroke-width="1"/>
<g fill="none" stroke="#8a8a8a" stroke-width="1"><path d="M366 208l6 0 3 5-3 5h-6l-3-5z"/><path d="M367 210l5 6M372 210l-5 6"/></g><path d="M379 211.5l2.5 2.5 2.5-2.5" fill="none" stroke="#9a9a9a" stroke-width="1.2"/>
<path d="M1385 118.5c2-3 4.5-4.5 6.5-4.5s4.5 1.5 6.5 4.5c-2 3-4.5 4.5-6.5 4.5s-4.5-1.5-6.5-4.5z" fill="none" stroke="#c8c8c8" stroke-width="1.3"/><circle cx="1391.5" cy="118.5" r="2" fill="#c8c8c8"/>
<path d="M1410 118.5l3 3 6-6.5" fill="none" stroke="#499c54" stroke-width="2"/>
</svg>

<!-- RIGHT STRIPE -->
<div class="a" style="left:1428px;top:79px;width:23px;height:754px;background:#3c3f41"></div>
<div class="a" style="left:1428px;top:79px;width:1px;height:754px;background:#2f3133"></div>
<svg class="a" style="left:1428px;top:79px" width="23" height="754">
<!-- bell -->
<path d="M6 19c2-1.5 2.5-3.5 2.5-5.5a4 4 0 0 1 8 0c0 2 .5 4 2.5 5.5z" fill="#4a9fd8"/><circle cx="11.5" cy="21" r="1.3" fill="#4a9fd8"/><circle cx="17" cy="10.5" r="2.6" fill="#3592c4" stroke="#3c3f41" stroke-width="1"/>
<!-- lingma -->
<g transform="translate(11.5 73)" fill="none" stroke="#c8c8c8" stroke-width="1.3"><path d="M-5-3l5-3 5 3v6l-5 3-5-3z"/><path d="M-2-4l4 8M2-4l-4 8"/></g>
<!-- endpoints -->
<g transform="translate(11.5 149)"><path d="M-4 3l4-6 4 6" fill="none" stroke="#d9692a" stroke-width="1.2"/><circle cx="0" cy="-4" r="2" fill="#d9692a"/><circle cx="-4.5" cy="4" r="2.5" fill="#d9692a"/><circle cx="4.5" cy="4" r="2.5" fill="#d9692a"/></g>
<!-- hierarchy -->
<g transform="translate(11.5 207)"><rect x="-2" y="-6" width="4" height="4" fill="#3592c4"/><rect x="-6.5" y="2" width="4" height="4" fill="#c75450"/><rect x="2.5" y="2" width="4" height="4" fill="#499c54"/><path d="M0-2v2M-4.5 2V0h9v2" fill="none" stroke="#aaa" stroke-width="1"/></g>
<!-- db -->
<g transform="translate(11.5 287.5)"><rect x="-5.5" y="-5.5" width="11" height="11" rx="2" fill="#3592c4"/><path d="M-5.5-2c2 1.2 9 1.2 11 0M-5.5 1c2 1.2 9 1.2 11 0M-5.5 4c2 1.2 9 1.2 11 0" fill="none" stroke="#3c3f41" stroke-width="1"/></g>
<!-- jclasslib -->
<g transform="translate(11.5 359)"><rect x="-5.5" y="-5.5" width="11" height="11" fill="#6fa8d0"/><path d="M-5.5-2h11M-5.5 1h11M-5.5 4h11M-2-5.5v11M1.5-5.5v11" stroke="#2b4f6a" stroke-width="0.7"/></g>
<!-- transactional -->
<g transform="translate(1 436)" fill="#c8c8c8"><rect x="8" y="9" width="5" height="5"/><rect x="5" y="17" width="3" height="3"/><rect x="13" y="17" width="3" height="3"/><path d="M10.5 13.5l-4 4M10.5 13.5l4 4" stroke="#c8c8c8" stroke-width="1"/></g>
<!-- apifox -->
<g transform="translate(11.5 721)"><rect x="-6" y="-6.5" width="12" height="12" rx="2.5" fill="#f0506e"/><path d="M-3-1a3.5 3.5 0 0 0 7 0" fill="none" stroke="#fff" stroke-width="1.5"/><path d="M2-4l2.5 1.5" stroke="#fff" stroke-width="1.2"/></g>
</svg>
<div class="t" style="left:1440px;top:116px;transform:translate(-50%,-50%) rotate(90deg);color:#c0c0c0;font-size:11.5px">通知</div>
<div class="t" style="left:1440px;top:183px;transform:translate(-50%,-50%) rotate(90deg);color:#b8b8b8;font-size:13.3px">Lingma</div>
<div class="t" style="left:1440px;top:249px;transform:translate(-50%,-50%) rotate(90deg);color:#c0c0c0;font-size:11px">端点</div>
<div class="t" style="left:1440px;top:319px;transform:translate(-50%,-50%) rotate(90deg);color:#c0c0c0;font-size:11px">层次结构</div>
<div class="t" style="left:1440px;top:395px;transform:translate(-50%,-50%) rotate(90deg);color:#c0c0c0;font-size:11px">数据库</div>
<div class="t" style="left:1440px;top:466px;transform:translate(-50%,-50%) rotate(90deg);color:#c0c0c0;font-size:12.5px">jclasslib</div>
<div class="t" style="left:1440px;top:658px;transform:translate(-50%,-50%) rotate(90deg);color:#b8b8b8;font-size:13.3px">TransactionalHelperPluginSettingsView</div>
<div class="a" style="left:1428px;top:808px;width:23px;height:25px;overflow:hidden"><div class="t" style="left:12px;top:18px;transform:translate(-50%,-50%) rotate(90deg);color:#b8b8b8;font-size:13.3px">Apifox</div></div>


<!-- BOTTOM -->
<div class="a" style="left:0;top:833px;width:1451px;height:1px;background:#2f3133"></div>
<div class="a" style="left:0;top:834px;width:1451px;height:22px;background:#3c3f41"></div>
<svg class="a" style="left:0;top:834px" width="700" height="22">
<!-- git -->
<path d="M35 6v11.5M35 11h6V6.5" fill="none" stroke="#3592c4" stroke-width="1.9"/><path d="M37.5 9l3.5-3.5 3.5 3.5z" fill="#3592c4"/>
<!-- run -->
<path d="M101 5v12l8.5-6z" fill="#499c54"/>
<!-- profiler -->
<circle cx="177" cy="10" r="5.2" fill="none" stroke="#a9aaab" stroke-width="1.4"/><path d="M177 7v3l-1.5 1.5" fill="none" stroke="#a9aaab" stroke-width="1.2"/><path d="M179 9.5v9l6.5-4.5z" fill="#499c54"/>
<!-- todo -->
<rect x="244" y="5" width="2" height="2" fill="#e048d8"/><rect x="247" y="5" width="7" height="2" fill="#e048d8"/>
<rect x="244" y="9" width="2" height="2" fill="#b07ff0"/><rect x="247" y="9" width="7" height="2" fill="#b07ff0"/>
<rect x="244" y="13" width="2" height="2" fill="#f0a732"/><rect x="247" y="13" width="7" height="2" fill="#f0a732"/>
<!-- check -->
<path d="M315 11l3.5 4 7-8" fill="none" stroke="#499c54" stroke-width="1.9"/>
<!-- terminal -->
<rect x="385.5" y="5" width="12" height="11" fill="#6b6e70"/><path d="M387.5 8l2.5 2-2.5 2M391 13h4" fill="none" stroke="#e0e0e0" stroke-width="1"/>
<!-- services -->
<path d="M448.5 4.5l5.2 3v6l-5.2 3-5.2-3v-6z" fill="#3592c4"/><path d="M447 8v6l4.5-3z" fill="#fff"/>
<!-- build hammer -->
<path d="M516.5 8l5-3.5 2.5 1.5-4 3z" fill="#499c54"/><path d="M520.5 7.5l7 9" stroke="#499c54" stroke-width="2.4"/>
<!-- T. -->
<path d="M574 5h9M578.5 5v12" stroke="#c8c8c8" stroke-width="1.8"/><rect x="581" y="15" width="3" height="1.8" fill="#c8c8c8"/>
</svg>
<div class="t" style="left:50px;top:837px;color:#bbbbbb;font-size:12px"><u>9</u>: Git</div>
<div class="t" style="left:115px;top:837px;color:#bbbbbb;font-size:12px"><u>4</u>: 运行</div>
<div class="t" style="left:189px;top:837px;color:#bbbbbb;font-size:12px">分析器</div>
<div class="t" style="left:259px;top:837px;color:#bbbbbb;font-size:12.6px">TODO</div>
<div class="t" style="left:330px;top:837px;color:#bbbbbb;font-size:12px"><u>6</u>: 问题</div>
<div class="t" style="left:402px;top:837px;color:#bbbbbb;font-size:12px">终端</div>
<div class="t" style="left:460px;top:837px;color:#bbbbbb;font-size:12px"><u>8</u>: 服务</div>
<div class="t" style="left:532px;top:837px;color:#bbbbbb;font-size:12px">构建</div>
<div class="t" style="left:590px;top:837px;color:#bbbbbb;font-size:12.6px">Easy I18n</div>

<div class="a" style="left:0;top:856px;width:1451px;height:1px;background:#4b4a45"></div>
<div class="a" style="left:0;top:857px;width:1451px;height:20px;background:#3c3f41"></div>
<svg class="a" style="left:0;top:857px" width="1451" height="20">
<rect x="14.5" y="4.5" width="9" height="9" fill="none" stroke="#c8c8c8" stroke-width="1.1"/><path d="M12.5 7v8.5H21" fill="none" stroke="#c8c8c8" stroke-width="1.1"/>
<circle cx="809.5" cy="9.5" r="6" fill="#3592c4"/><path d="M809.5 6l3 5h-6z" fill="none" stroke="#fff" stroke-width="1"/>
<g transform="translate(1161 9.5)" stroke="#8a8a8a" stroke-width="1.3"><path d="M0-6v3M0 6v-3M-6 0h3M6 0h-3M-4.2-4.2l2 2M4.2 4.2l-2-2M-4.2 4.2l2-2M4.2-4.2l-2 2"/></g>
<rect x="1181" y="3" width="6.5" height="6.5" fill="#f25022"/><rect x="1188.5" y="3" width="6.5" height="6.5" fill="#7fba00"/>
<rect x="1181" y="10.5" width="6.5" height="6.5" fill="#00a4ef"/><rect x="1188.5" y="10.5" width="6.5" height="6.5" fill="#ffb900"/>
<path d="M1362 3.5v13M1362 12c0-3 6-2 6-6.5" fill="none" stroke="#3592c4" stroke-width="1.6"/><circle cx="1368" cy="5" r="1.5" fill="#3592c4"/>
<rect x="1426" y="9" width="10" height="7" fill="#499c54"/><path d="M1428 9V6.5a2.5 2.5 0 0 1 5 0" fill="none" stroke="#499c54" stroke-width="1.3"/>
</svg>
<div class="t" style="left:40px;top:859px;color:#bbbbbb;font-size:12.2px">// 构建在 746毫秒内成功完成 (3 分钟之前)</div>
<div class="t" style="left:820px;top:859px;color:#bbbbbb;font-size:14px">6 Δ/up-to-date</div>
<div class="t" style="left:921px;top:859px;color:#bbbbbb;font-size:13px">Blame: You 01 7月 2025 13:24</div>
<div class="t" style="left:1110px;top:859px;color:#bbbbbb;font-size:13.4px">19:29</div>
<div class="t" style="left:1206px;top:859px;color:#bbbbbb;font-size:12.5px">CRLF</div>
<div class="t" style="left:1249px;top:859px;color:#bbbbbb;font-size:13px">UTF-8</div>
<div class="t" style="left:1298px;top:859px;color:#bbbbbb;font-size:13px">4 个空格</div>
<div class="t" style="left:1373px;top:859px;color:#bbbbbb;font-size:14px">master</div>


</body></html>
